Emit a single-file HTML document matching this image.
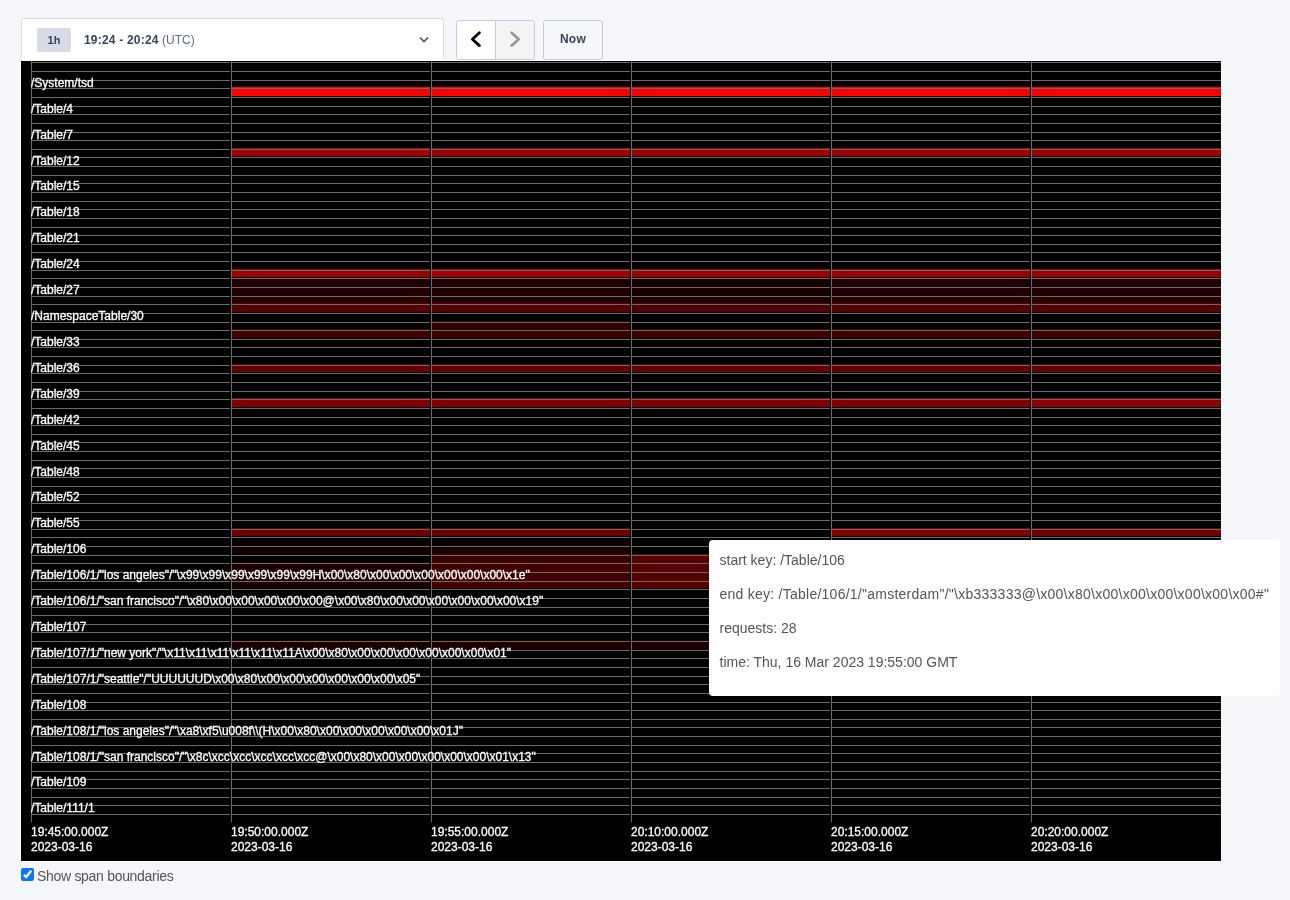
<!DOCTYPE html>
<html><head><meta charset="utf-8"><style>
html,body{margin:0;padding:0;}
body{width:1290px;height:900px;background:#f5f6fa;position:relative;overflow:hidden;font-family:"Liberation Sans",sans-serif;}
.abs{position:absolute;will-change:transform;}
.range{left:21px;top:18px;width:420px;height:42px;background:#fff;border:1px solid #dcdcdc;border-bottom:none;border-radius:3px;box-sizing:border-box;width:423px;}
.badge{left:37px;top:28px;width:34px;height:24px;background:#d6dbe7;border-radius:3px;color:#394455;font-weight:bold;font-size:11px;line-height:24px;text-align:center;}
.rtext{left:84px;top:33px;font-size:12px;line-height:14px;color:#394455;white-space:nowrap;}
.rtext b{letter-spacing:0.2px;}
.rtext b{font-weight:bold;}
.rtext span{color:#5f6c87;}
.navgrp{left:456px;top:20px;width:79px;height:40px;border:1px solid #c5cbdc;border-radius:3px;box-sizing:border-box;overflow:hidden;background:#f4f4f4;}
.navl{left:0;top:0;width:38px;height:38px;background:#fff;border-right:1px solid #c5cbdc;}
.now{left:543px;top:20px;width:60px;height:40px;border:1px solid #c5cbdc;border-radius:3px;box-sizing:border-box;color:#394455;font-weight:bold;font-size:12px;line-height:36px;text-align:center;letter-spacing:0.3px;}
.frame{left:20px;top:60px;width:1202px;height:802px;background:#fff;}
.kv{position:absolute;left:21px;top:61px;will-change:transform;}
.kv text{font-family:"Liberation Sans",sans-serif;font-size:12px;fill:#fff;stroke:#fff;stroke-width:0.3px;}
.tip{left:709px;top:540px;width:571px;height:156px;background:#fff;border-radius:4px;box-sizing:border-box;color:#555;font-size:14px;}
.tip div{position:absolute;left:10.5px;white-space:nowrap;}
.cb{left:21px;top:868px;width:13px;height:13px;background:#0b75ff;border-radius:2px;}
.cbl{left:37px;top:868px;font-size:14px;line-height:16px;color:#555;white-space:nowrap;letter-spacing:-0.3px;}
</style></head><body>
<div class="abs range"></div>
<div class="abs badge">1h</div>
<div class="abs rtext"><b>19:24 - 20:24</b> <span>(UTC)</span></div>
<svg class="abs" style="left:418px;top:36px" width="12" height="8" viewBox="0 0 12 8"><path d="M2 1.5L6 5.5L10 1.5" stroke="#475872" stroke-width="1.6" fill="none"/></svg>
<div class="abs navgrp"><div class="abs navl"></div>
<svg class="abs" style="left:12px;top:9px" width="16" height="20" viewBox="0 0 16 20"><path d="M10.4 2.8L3.4 9.2L10.4 15.6" stroke="#000" stroke-width="2.8" fill="none" stroke-linecap="round" stroke-linejoin="round"/></svg>
<svg class="abs" style="left:51px;top:9px" width="16" height="20" viewBox="0 0 16 20"><path d="M3.7 2.8L10.7 9.2L3.7 15.6" stroke="#999" stroke-width="2.8" fill="none" stroke-linecap="round" stroke-linejoin="round"/></svg>
</div>
<div class="abs now">Now</div>
<div class="abs frame"></div>
<svg class="kv" width="1200" height="800" viewBox="21 61 1200 800">
<rect x="21" y="61" width="1200" height="800" fill="#000"/>
<rect x="232" y="87" width="198" height="9" fill="#ff0000"/>
<rect x="432" y="87" width="198" height="9" fill="#ff0000"/>
<rect x="632" y="87" width="198" height="9" fill="#ff0000"/>
<rect x="832" y="87" width="198" height="9" fill="#ff0000"/>
<rect x="1032" y="87" width="189" height="9" fill="#ff0000"/>
<rect x="232" y="148" width="198" height="8" fill="#a00000"/>
<rect x="432" y="148" width="198" height="8" fill="#9a0000"/>
<rect x="632" y="148" width="198" height="8" fill="#9a0000"/>
<rect x="832" y="148" width="198" height="8" fill="#9a0000"/>
<rect x="1032" y="148" width="189" height="8" fill="#9a0000"/>
<rect x="232" y="269" width="198" height="8" fill="#9a0000"/>
<rect x="432" y="269" width="198" height="8" fill="#a00000"/>
<rect x="632" y="269" width="198" height="8" fill="#990000"/>
<rect x="832" y="269" width="198" height="8" fill="#9a0000"/>
<rect x="1032" y="269" width="189" height="8" fill="#9a0000"/>
<rect x="232" y="277" width="198" height="9" fill="#200000"/>
<rect x="432" y="277" width="198" height="9" fill="#200000"/>
<rect x="632" y="277" width="198" height="9" fill="#180000"/>
<rect x="832" y="277" width="198" height="9" fill="#200000"/>
<rect x="1032" y="277" width="189" height="9" fill="#200000"/>
<rect x="232" y="286" width="198" height="9" fill="#200000"/>
<rect x="432" y="286" width="198" height="9" fill="#200000"/>
<rect x="632" y="286" width="198" height="9" fill="#180000"/>
<rect x="832" y="286" width="198" height="9" fill="#200000"/>
<rect x="1032" y="286" width="189" height="9" fill="#200000"/>
<rect x="232" y="295" width="198" height="8" fill="#280000"/>
<rect x="432" y="295" width="198" height="8" fill="#200000"/>
<rect x="632" y="295" width="198" height="8" fill="#180000"/>
<rect x="832" y="295" width="198" height="8" fill="#280000"/>
<rect x="1032" y="295" width="189" height="8" fill="#280000"/>
<rect x="232" y="303" width="198" height="9" fill="#580000"/>
<rect x="432" y="303" width="198" height="9" fill="#580000"/>
<rect x="632" y="303" width="198" height="9" fill="#500000"/>
<rect x="832" y="303" width="198" height="9" fill="#580000"/>
<rect x="1032" y="303" width="189" height="9" fill="#580000"/>
<rect x="432" y="321" width="198" height="8" fill="#300000"/>
<rect x="232" y="329" width="198" height="9" fill="#400000"/>
<rect x="432" y="329" width="198" height="9" fill="#3a0000"/>
<rect x="632" y="329" width="198" height="9" fill="#400000"/>
<rect x="832" y="329" width="198" height="9" fill="#400000"/>
<rect x="1032" y="329" width="189" height="9" fill="#400000"/>
<rect x="232" y="364" width="198" height="8" fill="#600000"/>
<rect x="432" y="364" width="198" height="8" fill="#600000"/>
<rect x="632" y="364" width="198" height="8" fill="#600000"/>
<rect x="832" y="364" width="198" height="8" fill="#600000"/>
<rect x="1032" y="364" width="189" height="8" fill="#600000"/>
<rect x="232" y="398" width="198" height="9" fill="#800000"/>
<rect x="432" y="398" width="198" height="9" fill="#800000"/>
<rect x="632" y="398" width="198" height="9" fill="#800000"/>
<rect x="832" y="398" width="198" height="9" fill="#800000"/>
<rect x="1032" y="398" width="189" height="9" fill="#880000"/>
<rect x="232" y="528" width="198" height="8" fill="#660000"/>
<rect x="432" y="528" width="198" height="8" fill="#660000"/>
<rect x="832" y="528" width="198" height="8" fill="#800000"/>
<rect x="1032" y="528" width="189" height="8" fill="#700000"/>
<rect x="232" y="545" width="198" height="9" fill="#150000"/>
<rect x="432" y="545" width="198" height="9" fill="#1a0000"/>
<rect x="432" y="554" width="198" height="8" fill="#3c0000"/>
<rect x="632" y="554" width="198" height="8" fill="#580000"/>
<rect x="232" y="562" width="198" height="9" fill="#1c0000"/>
<rect x="432" y="562" width="198" height="9" fill="#440000"/>
<rect x="632" y="562" width="198" height="9" fill="#580000"/>
<rect x="232" y="571" width="198" height="9" fill="#1c0000"/>
<rect x="432" y="571" width="198" height="9" fill="#440000"/>
<rect x="632" y="571" width="198" height="9" fill="#580000"/>
<rect x="232" y="580" width="198" height="8" fill="#180000"/>
<rect x="432" y="580" width="198" height="8" fill="#440000"/>
<rect x="632" y="580" width="198" height="8" fill="#580000"/>
<rect x="232" y="640" width="198" height="9" fill="#1a0000"/>
<rect x="432" y="640" width="198" height="9" fill="#1c0000"/>
<rect x="632" y="640" width="198" height="9" fill="#1a0000"/>
<path d="M32 62.5H230M232 62.5H430M432 62.5H630M632 62.5H830M832 62.5H1030M1032 62.5H1221M32 71.5H230M232 71.5H430M432 71.5H630M632 71.5H830M832 71.5H1030M1032 71.5H1221M32 80.5H230M232 80.5H430M432 80.5H630M632 80.5H830M832 80.5H1030M1032 80.5H1221M32 88.5H230M232 88.5H430M432 88.5H630M632 88.5H830M832 88.5H1030M1032 88.5H1221M32 97.5H230M232 97.5H430M432 97.5H630M632 97.5H830M832 97.5H1030M1032 97.5H1221M32 106.5H230M232 106.5H430M432 106.5H630M632 106.5H830M832 106.5H1030M1032 106.5H1221M32 114.5H230M232 114.5H430M432 114.5H630M632 114.5H830M832 114.5H1030M1032 114.5H1221M32 123.5H230M232 123.5H430M432 123.5H630M632 123.5H830M832 123.5H1030M1032 123.5H1221M32 132.5H230M232 132.5H430M432 132.5H630M632 132.5H830M832 132.5H1030M1032 132.5H1221M32 140.5H230M232 140.5H430M432 140.5H630M632 140.5H830M832 140.5H1030M1032 140.5H1221M32 149.5H230M232 149.5H430M432 149.5H630M632 149.5H830M832 149.5H1030M1032 149.5H1221M32 157.5H230M232 157.5H430M432 157.5H630M632 157.5H830M832 157.5H1030M1032 157.5H1221M32 166.5H230M232 166.5H430M432 166.5H630M632 166.5H830M832 166.5H1030M1032 166.5H1221M32 175.5H230M232 175.5H430M432 175.5H630M632 175.5H830M832 175.5H1030M1032 175.5H1221M32 183.5H230M232 183.5H430M432 183.5H630M632 183.5H830M832 183.5H1030M1032 183.5H1221M32 192.5H230M232 192.5H430M432 192.5H630M632 192.5H830M832 192.5H1030M1032 192.5H1221M32 201.5H230M232 201.5H430M432 201.5H630M632 201.5H830M832 201.5H1030M1032 201.5H1221M32 209.5H230M232 209.5H430M432 209.5H630M632 209.5H830M832 209.5H1030M1032 209.5H1221M32 218.5H230M232 218.5H430M432 218.5H630M632 218.5H830M832 218.5H1030M1032 218.5H1221M32 227.5H230M232 227.5H430M432 227.5H630M632 227.5H830M832 227.5H1030M1032 227.5H1221M32 235.5H230M232 235.5H430M432 235.5H630M632 235.5H830M832 235.5H1030M1032 235.5H1221M32 244.5H230M232 244.5H430M432 244.5H630M632 244.5H830M832 244.5H1030M1032 244.5H1221M32 252.5H230M232 252.5H430M432 252.5H630M632 252.5H830M832 252.5H1030M1032 252.5H1221M32 261.5H230M232 261.5H430M432 261.5H630M632 261.5H830M832 261.5H1030M1032 261.5H1221M32 270.5H230M232 270.5H430M432 270.5H630M632 270.5H830M832 270.5H1030M1032 270.5H1221M32 278.5H230M232 278.5H430M432 278.5H630M632 278.5H830M832 278.5H1030M1032 278.5H1221M32 287.5H230M232 287.5H430M432 287.5H630M632 287.5H830M832 287.5H1030M1032 287.5H1221M32 296.5H230M232 296.5H430M432 296.5H630M632 296.5H830M832 296.5H1030M1032 296.5H1221M32 304.5H230M232 304.5H430M432 304.5H630M632 304.5H830M832 304.5H1030M1032 304.5H1221M32 313.5H230M232 313.5H430M432 313.5H630M632 313.5H830M832 313.5H1030M1032 313.5H1221M32 322.5H230M232 322.5H430M432 322.5H630M632 322.5H830M832 322.5H1030M1032 322.5H1221M32 330.5H230M232 330.5H430M432 330.5H630M632 330.5H830M832 330.5H1030M1032 330.5H1221M32 339.5H230M232 339.5H430M432 339.5H630M632 339.5H830M832 339.5H1030M1032 339.5H1221M32 347.5H230M232 347.5H430M432 347.5H630M632 347.5H830M832 347.5H1030M1032 347.5H1221M32 356.5H230M232 356.5H430M432 356.5H630M632 356.5H830M832 356.5H1030M1032 356.5H1221M32 365.5H230M232 365.5H430M432 365.5H630M632 365.5H830M832 365.5H1030M1032 365.5H1221M32 373.5H230M232 373.5H430M432 373.5H630M632 373.5H830M832 373.5H1030M1032 373.5H1221M32 382.5H230M232 382.5H430M432 382.5H630M632 382.5H830M832 382.5H1030M1032 382.5H1221M32 391.5H230M232 391.5H430M432 391.5H630M632 391.5H830M832 391.5H1030M1032 391.5H1221M32 399.5H230M232 399.5H430M432 399.5H630M632 399.5H830M832 399.5H1030M1032 399.5H1221M32 408.5H230M232 408.5H430M432 408.5H630M632 408.5H830M832 408.5H1030M1032 408.5H1221M32 417.5H230M232 417.5H430M432 417.5H630M632 417.5H830M832 417.5H1030M1032 417.5H1221M32 425.5H230M232 425.5H430M432 425.5H630M632 425.5H830M832 425.5H1030M1032 425.5H1221M32 434.5H230M232 434.5H430M432 434.5H630M632 434.5H830M832 434.5H1030M1032 434.5H1221M32 442.5H230M232 442.5H430M432 442.5H630M632 442.5H830M832 442.5H1030M1032 442.5H1221M32 451.5H230M232 451.5H430M432 451.5H630M632 451.5H830M832 451.5H1030M1032 451.5H1221M32 460.5H230M232 460.5H430M432 460.5H630M632 460.5H830M832 460.5H1030M1032 460.5H1221M32 468.5H230M232 468.5H430M432 468.5H630M632 468.5H830M832 468.5H1030M1032 468.5H1221M32 477.5H230M232 477.5H430M432 477.5H630M632 477.5H830M832 477.5H1030M1032 477.5H1221M32 486.5H230M232 486.5H430M432 486.5H630M632 486.5H830M832 486.5H1030M1032 486.5H1221M32 494.5H230M232 494.5H430M432 494.5H630M632 494.5H830M832 494.5H1030M1032 494.5H1221M32 503.5H230M232 503.5H430M432 503.5H630M632 503.5H830M832 503.5H1030M1032 503.5H1221M32 512.5H230M232 512.5H430M432 512.5H630M632 512.5H830M832 512.5H1030M1032 512.5H1221M32 520.5H230M232 520.5H430M432 520.5H630M632 520.5H830M832 520.5H1030M1032 520.5H1221M32 529.5H230M232 529.5H430M432 529.5H630M632 529.5H830M832 529.5H1030M1032 529.5H1221M32 537.5H230M232 537.5H430M432 537.5H630M632 537.5H830M832 537.5H1030M1032 537.5H1221M32 546.5H230M232 546.5H430M432 546.5H630M632 546.5H830M832 546.5H1030M1032 546.5H1221M32 555.5H230M232 555.5H430M432 555.5H630M632 555.5H830M832 555.5H1030M1032 555.5H1221M32 563.5H230M232 563.5H430M432 563.5H630M632 563.5H830M832 563.5H1030M1032 563.5H1221M32 572.5H230M232 572.5H430M432 572.5H630M632 572.5H830M832 572.5H1030M1032 572.5H1221M32 581.5H230M232 581.5H430M432 581.5H630M632 581.5H830M832 581.5H1030M1032 581.5H1221M32 589.5H230M232 589.5H430M432 589.5H630M632 589.5H830M832 589.5H1030M1032 589.5H1221M32 598.5H230M232 598.5H430M432 598.5H630M632 598.5H830M832 598.5H1030M1032 598.5H1221M32 607.5H230M232 607.5H430M432 607.5H630M632 607.5H830M832 607.5H1030M1032 607.5H1221M32 615.5H230M232 615.5H430M432 615.5H630M632 615.5H830M832 615.5H1030M1032 615.5H1221M32 624.5H230M232 624.5H430M432 624.5H630M632 624.5H830M832 624.5H1030M1032 624.5H1221M32 632.5H230M232 632.5H430M432 632.5H630M632 632.5H830M832 632.5H1030M1032 632.5H1221M32 641.5H230M232 641.5H430M432 641.5H630M632 641.5H830M832 641.5H1030M1032 641.5H1221M32 650.5H230M232 650.5H430M432 650.5H630M632 650.5H830M832 650.5H1030M1032 650.5H1221M32 658.5H230M232 658.5H430M432 658.5H630M632 658.5H830M832 658.5H1030M1032 658.5H1221M32 667.5H230M232 667.5H430M432 667.5H630M632 667.5H830M832 667.5H1030M1032 667.5H1221M32 676.5H230M232 676.5H430M432 676.5H630M632 676.5H830M832 676.5H1030M1032 676.5H1221M32 684.5H230M232 684.5H430M432 684.5H630M632 684.5H830M832 684.5H1030M1032 684.5H1221M32 693.5H230M232 693.5H430M432 693.5H630M632 693.5H830M832 693.5H1030M1032 693.5H1221M32 702.5H230M232 702.5H430M432 702.5H630M632 702.5H830M832 702.5H1030M1032 702.5H1221M32 710.5H230M232 710.5H430M432 710.5H630M632 710.5H830M832 710.5H1030M1032 710.5H1221M32 719.5H230M232 719.5H430M432 719.5H630M632 719.5H830M832 719.5H1030M1032 719.5H1221M32 727.5H230M232 727.5H430M432 727.5H630M632 727.5H830M832 727.5H1030M1032 727.5H1221M32 736.5H230M232 736.5H430M432 736.5H630M632 736.5H830M832 736.5H1030M1032 736.5H1221M32 745.5H230M232 745.5H430M432 745.5H630M632 745.5H830M832 745.5H1030M1032 745.5H1221M32 753.5H230M232 753.5H430M432 753.5H630M632 753.5H830M832 753.5H1030M1032 753.5H1221M32 762.5H230M232 762.5H430M432 762.5H630M632 762.5H830M832 762.5H1030M1032 762.5H1221M32 771.5H230M232 771.5H430M432 771.5H630M632 771.5H830M832 771.5H1030M1032 771.5H1221M32 779.5H230M232 779.5H430M432 779.5H630M632 779.5H830M832 779.5H1030M1032 779.5H1221M32 788.5H230M232 788.5H430M432 788.5H630M632 788.5H830M832 788.5H1030M1032 788.5H1221M32 797.5H230M232 797.5H430M432 797.5H630M632 797.5H830M832 797.5H1030M1032 797.5H1221M32 805.5H230M232 805.5H430M432 805.5H630M632 805.5H830M832 805.5H1030M1032 805.5H1221M32 814.5H230M232 814.5H430M432 814.5H630M632 814.5H830M832 814.5H1030M1032 814.5H1221" stroke="#6a6a6a" stroke-width="1" fill="none"/>
<path d="M31.5 61V822M231.5 61V822M431.5 61V822M631.5 61V822M831.5 61V822M1031.5 61V822" stroke="#6a6a6a" stroke-width="1" fill="none"/>
<text x="31" y="87">/System/tsd</text>
<text x="31" y="113">/Table/4</text>
<text x="31" y="139">/Table/7</text>
<text x="31" y="165">/Table/12</text>
<text x="31" y="190">/Table/15</text>
<text x="31" y="216">/Table/18</text>
<text x="31" y="242">/Table/21</text>
<text x="31" y="268">/Table/24</text>
<text x="31" y="294">/Table/27</text>
<text x="31" y="320">/NamespaceTable/30</text>
<text x="31" y="346">/Table/33</text>
<text x="31" y="372">/Table/36</text>
<text x="31" y="398">/Table/39</text>
<text x="31" y="424">/Table/42</text>
<text x="31" y="450">/Table/45</text>
<text x="31" y="476">/Table/48</text>
<text x="31" y="501">/Table/52</text>
<text x="31" y="527">/Table/55</text>
<text x="31" y="553">/Table/106</text>
<text x="31" y="579">/Table/106/1/&quot;los angeles&quot;/&quot;\x99\x99\x99\x99\x99\x99H\x00\x80\x00\x00\x00\x00\x00\x00\x1e&quot;</text>
<text x="31" y="605">/Table/106/1/&quot;san francisco&quot;/&quot;\x80\x00\x00\x00\x00\x00@\x00\x80\x00\x00\x00\x00\x00\x00\x19&quot;</text>
<text x="31" y="631">/Table/107</text>
<text x="31" y="657">/Table/107/1/&quot;new york&quot;/&quot;\x11\x11\x11\x11\x11\x11A\x00\x80\x00\x00\x00\x00\x00\x00\x01&quot;</text>
<text x="31" y="683">/Table/107/1/&quot;seattle&quot;/&quot;UUUUUUD\x00\x80\x00\x00\x00\x00\x00\x00\x05&quot;</text>
<text x="31" y="709">/Table/108</text>
<text x="31" y="735">/Table/108/1/&quot;los angeles&quot;/&quot;\xa8\xf5\u008f\\(H\x00\x80\x00\x00\x00\x00\x00\x01J&quot;</text>
<text x="31" y="761">/Table/108/1/&quot;san francisco&quot;/&quot;\x8c\xcc\xcc\xcc\xcc\xcc@\x00\x80\x00\x00\x00\x00\x00\x01\x13&quot;</text>
<text x="31" y="786">/Table/109</text>
<text x="31" y="812">/Table/111/1</text>
<text x="31" y="836">19:45:00.000Z</text><text x="31" y="851">2023-03-16</text>
<text x="231" y="836">19:50:00.000Z</text><text x="231" y="851">2023-03-16</text>
<text x="431" y="836">19:55:00.000Z</text><text x="431" y="851">2023-03-16</text>
<text x="631" y="836">20:10:00.000Z</text><text x="631" y="851">2023-03-16</text>
<text x="831" y="836">20:15:00.000Z</text><text x="831" y="851">2023-03-16</text>
<text x="1031" y="836">20:20:00.000Z</text><text x="1031" y="851">2023-03-16</text>
</svg>
<div class="abs tip">
<div style="top:12px">start key: /Table/106</div>
<div style="top:46px;letter-spacing:0.25px">end key: /Table/106/1/"amsterdam"/"\xb333333@\x00\x80\x00\x00\x00\x00\x00\x00#"</div>
<div style="top:80px">requests: 28</div>
<div style="top:114px">time: Thu, 16 Mar 2023 19:55:00 GMT</div>
</div>
<div class="abs cb"><svg style="display:block" width="13" height="13" viewBox="0 0 13 13"><path d="M2.9 6.8L5.2 9L10.2 2.7" stroke="#fff" stroke-width="2.3" fill="none"/></svg></div>
<div class="abs cbl">Show span boundaries</div>
</body></html>
